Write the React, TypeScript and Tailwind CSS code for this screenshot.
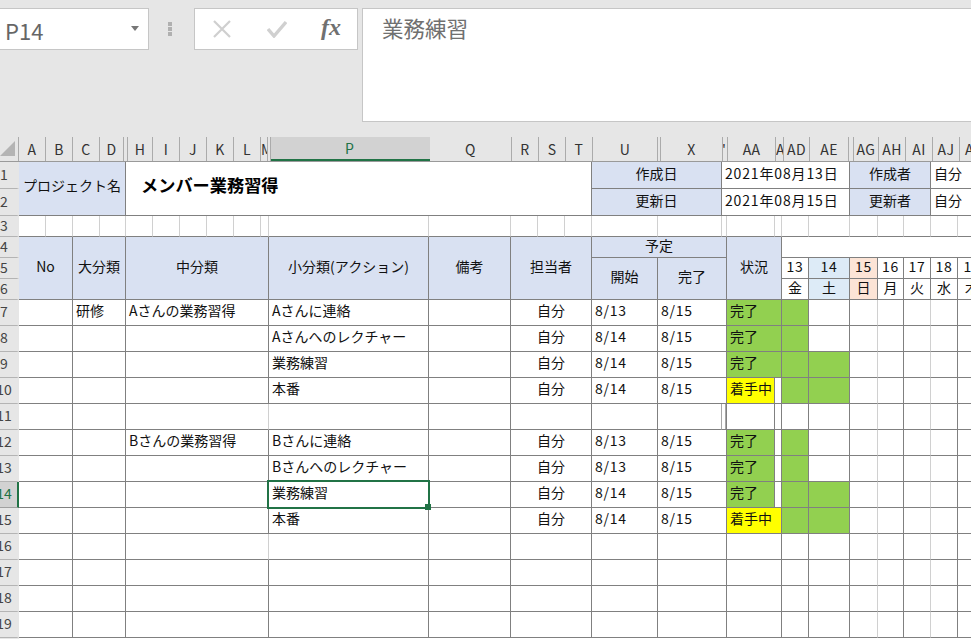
import React from "react";

const FONT = "font-['Noto_Sans_CJK_JP','Noto_Sans',sans-serif]";
const blue = "bg-[#d9e1f2]";
const green = "bg-[#92d050]";
const yellow = "bg-[#ffff00]";
const D = "border-r border-b border-[#808080]";
const LATIN = "tracking-[0.7px]";

function C({ className = "", children, pad = "pb-[5px]" }: { className?: string; children?: React.ReactNode; pad?: string }) {
  return <div className={`flex items-center overflow-hidden whitespace-nowrap ${pad} text-[14px] leading-none text-[#111] ${D} ${className}`}>{children}</div>;
}

function RowHead({ n, active }: { n: number; active?: boolean }) {
  return (
    <div className={`col-start-1 flex items-center overflow-hidden border-b pb-[3px] ${active ? "border-[#a0a0a0] bg-[#d2d2d2] text-[#217346]" : "border-[#b4b4b4] bg-[#e6e6e6] text-[#444]"} border-r-2 ${active ? "border-r-[#217346]" : "border-r-transparent"} text-[14px] leading-none`}>
      <span className="-ml-[10px] w-[28px] shrink-0 text-center">{n}</span>
    </div>
  );
}

const headCols: [string, string][] = [
  ["A", "w-[27px] justify-center"], ["B", "w-[27px] justify-center"], ["C", "w-[27px] justify-center"], ["D", "w-[24px] justify-center"], ["", "w-[4px]"],
  ["H", "w-[25px] justify-center"], ["I", "w-[27px] justify-center"], ["J", "w-[27px] justify-center"], ["K", "w-[27px] justify-center"], ["L", "w-[27px] justify-center"], ["M", "w-[7px] justify-start"], ["", "w-[3px]"],
];
const headCols2: [string, string][] = [
  ["Q", "w-[82px] justify-center"], ["R", "w-[27px] justify-center"], ["S", "w-[27px] justify-center"], ["T", "w-[27px] justify-center"], ["U", "w-[65px] justify-center"], ["", "w-[3px]"], ["X", "w-[62px] justify-center"], ["'", "w-[5px] justify-start -indent-[1px]"],
  ["AA", "w-[48px] justify-center"], ["A", "w-[8px] justify-start"], ["AD", "w-[26px] justify-center"], ["AE", "w-[39px] justify-center"], ["", "w-[5px]"], ["AG", "w-[25px] justify-center"], ["AH", "w-[27px] justify-center"], ["AI", "w-[27px] justify-center"], ["AJ", "w-[27px] justify-center"], ["A", "w-[20px] justify-center"],
];

function HeadCell({ label, w }: { label: string; w: string }) {
  return <div className={`flex shrink-0 items-center overflow-hidden border-r border-[#ababab] text-[14px] leading-none tracking-[0.4px] text-[#333] ${w}`}>{label}</div>;
}

function TrailingCells({ fill }: { fill: number }) {
  return (
    <>
      <C className={fill >= 1 ? green : ""} />
      <C className={fill >= 2 ? green : ""} />
      <div className="border-b border-r border-b-[#808080] border-r-[#d0d0d0]" />
      <div className="border-b border-r border-[#808080]" />
      <div className="border-b border-r border-b-[#808080] border-r-[#d0d0d0]" />
      <div className="border-b border-r border-[#808080]" />
      <div className="border-b border-[#808080]" />
    </>
  );
}

type R = { n: number; c?: string; m?: string; s?: string; a?: string; st?: string; en?: string; status?: string; span?: boolean; fill?: number; light?: boolean };

function DataRow({ r }: { r: R }) {
  const isBusy = r.status === "着手中";
  return (
    <>
      <RowHead n={r.n} active={r.n === 14} />
      <C className="col-span-2" />
      <C className="col-span-2 pl-[3px]">{r.c}</C>
      <C className={`col-span-6 pl-[3px] ${r.light ? "border-r-[#d0d0d0]" : ""}`}>{r.m}</C>
      <C className="pl-[3px]">{r.s}</C>
      <C />
      <C className="col-span-3 justify-center">{r.a}</C>
      <C className={`pl-[3px] ${LATIN}`}>{r.st}</C>
      {r.n === 11 ? (
        <>
          <C className="border-r-[#a8a8a8]" />
          <C className="shadow-[inset_-1px_0_0_#a8a8a8]" />
        </>
      ) : (
        <C className={`col-span-2 pl-[3px] ${LATIN}`}>{r.en}</C>
      )}
      {r.span ? (
        <C className={`col-span-2 pl-[3px] ${isBusy ? yellow : r.status ? green : ""}`}>{r.status}</C>
      ) : (
        <>
          <C className={`pl-[3px] ${isBusy ? yellow : r.status ? green : ""}`}>{r.status}</C>
          <C />
        </>
      )}
      <TrailingCells fill={r.fill ?? 0} />
    </>
  );
}

const rows: R[] = [
  { n: 7, c: "研修", m: "Aさんの業務習得", s: "Aさんに連絡", a: "自分", st: "8/13", en: "8/15", status: "完了", span: true, fill: 1 },
  { n: 8, s: "Aさんへのレクチャー", a: "自分", st: "8/14", en: "8/15", status: "完了", span: true, fill: 1 },
  { n: 9, s: "業務練習", a: "自分", st: "8/14", en: "8/15", status: "完了", span: true, fill: 2 },
  { n: 10, s: "本番", a: "自分", st: "8/14", en: "8/15", status: "着手中", fill: 2 },
  { n: 11, light: true },
  { n: 12, m: "Bさんの業務習得", s: "Bさんに連絡", a: "自分", st: "8/13", en: "8/15", status: "完了", fill: 1 },
  { n: 13, s: "Bさんへのレクチャー", a: "自分", st: "8/13", en: "8/15", status: "完了", fill: 1 },
  { n: 14, s: "業務練習", a: "自分", st: "8/14", en: "8/15", status: "完了", fill: 2 },
  { n: 15, s: "本番", a: "自分", st: "8/14", en: "8/15", status: "着手中", span: true, fill: 2 },
  { n: 16, light: true, span: true },
  { n: 17, span: true },
  { n: 18, span: true },
  { n: 19, span: true },
];

export default function App() {
  return (
    <div className={`relative h-[639px] w-[971px] overflow-hidden bg-[#e6e6e6] ${FONT}`}>
      {/* Formula bar */}
      <div className="flex h-[137px] items-start pt-[8px]">
        <div className="-ml-[3px] flex h-[42px] w-[152px] shrink-0 items-center border border-[#c6c6c6] bg-white pl-[7px] pr-[9px] text-[22px] leading-none text-[#666]">
          <span className="flex-1 pt-[2px]">P14</span>
          <svg className="mb-[2px]" width="8" height="5" viewBox="0 0 8 5"><path d="M0 0h8L4 5z" fill="#777" /></svg>
        </div>
        <div className="flex w-[41px] shrink-0 flex-col items-center gap-[1px] pt-[14px]">
          <span className="h-[4px] w-[4px] bg-[#b0b0b0]" />
          <span className="h-[4px] w-[4px] bg-[#b0b0b0]" />
          <span className="h-[4px] w-[4px] bg-[#b0b0b0]" />
        </div>
        <div className="ml-[4px] flex h-[42px] w-[164px] shrink-0 items-center border border-[#c6c6c6] bg-white">
          <svg className="ml-[18px]" width="18" height="18" viewBox="0 0 18 18"><path d="M1 1l16 16M17 1L1 17" stroke="#cfcfcf" strokeWidth="2.2" fill="none" /></svg>
          <svg className="ml-[36px]" width="20" height="18" viewBox="0 0 20 18"><path d="M1 9l6 7L19 2" stroke="#d0d0d0" strokeWidth="3.4" fill="none" /></svg>
          <span className="mb-[4px] ml-[34px] font-['Liberation_Serif',serif] text-[24px] font-bold italic leading-none text-[#707070]">fx</span>
        </div>
        <div className="ml-[4px] flex h-[114px] flex-1 items-start border border-r-0 border-[#c6c6c6] bg-white pl-[19px] pt-[5px] text-[21.5px] leading-[28px] text-[#707070]">業務練習</div>
      </div>

      {/* Column headers */}
      <div className="flex h-[25px] border-b border-[#9a9a9a]">
        <div className="flex w-[19px] shrink-0 items-end border-r border-[#ababab] pb-[4px]">
          <svg width="16" height="16" viewBox="0 0 16 16"><path d="M15 0v15H0z" fill="#b4b4b4" /></svg>
        </div>
        {headCols.map(([l, w], i) => <HeadCell key={i} label={l} w={w} />)}
        <div className="flex w-[159px] shrink-0 items-center justify-center border-b-2 border-[#217346] bg-[#d2d2d2] pr-[2px] text-[14px] leading-none text-[#217346]">P</div>
        {headCols2.map(([l, w], i) => <HeadCell key={i} label={l} w={w} />)}
      </div>

      {/* Sheet */}
      <div className="grid grid-flow-dense grid-cols-[19px_27px_27px_27px_26px_27px_27px_27px_27px_27px_8px_160px_82px_27px_27px_27px_66px_64px_5px_48px_7px_27px_41px_28px_26px_27px_27px_28px] grid-rows-[27px_27px_21px_21px_21px_21px_repeat(14,26px)] bg-white">
        {/* rows 1-2 */}
        <RowHead n={1} />
        <C pad="pb-[8px]" className={`col-span-4 row-span-2 justify-center ${blue}`}>プロジェクト名</C>
        <C pad="pb-[8px]" className="col-span-11 row-span-2 pl-[15px] text-[17.2px] font-bold text-black">メンバー業務習得</C>
        <C className={`col-span-2 justify-center ${blue}`}>作成日</C>
        <C className={`col-span-5 pl-[3px] tracking-[0.85px]`}>2021年08月13日</C>
        <C className={`col-span-3 justify-center ${blue}`}>作成者</C>
        <C className="col-span-2 border-r-0 pl-[3px]">自分</C>
        <RowHead n={2} />
        <C className={`col-span-2 justify-center ${blue}`}>更新日</C>
        <C className={`col-span-5 pl-[3px] tracking-[0.85px]`}>2021年08月15日</C>
        <C className={`col-span-3 justify-center ${blue}`}>更新者</C>
        <C className="col-span-2 border-r-0 pl-[3px]">自分</C>

        {/* row 3 */}
        <RowHead n={3} />
        {Array.from({ length: 27 }, (_, i) => (
          <div key={i} className="border-b border-r border-b-[#808080] border-r-[#d0d0d0]" />
        ))}

        {/* rows 4-6 */}
        <RowHead n={4} />
        <C className={`col-span-2 row-span-3 justify-center ${blue}`}>No</C>
        <C className={`col-span-2 row-span-3 justify-center ${blue}`}>大分類</C>
        <C className={`col-span-6 row-span-3 justify-center ${blue}`}>中分類</C>
        <C className={`row-span-3 justify-center ${blue}`}>小分類(アクション)</C>
        <C className={`row-span-3 justify-center ${blue}`}>備考</C>
        <C className={`col-span-3 row-span-3 justify-center ${blue}`}>担当者</C>
        <C className={`col-span-3 justify-center ${blue}`}>予定</C>
        <C className={`col-span-2 row-span-3 justify-center ${blue}`}>状況</C>
        <div className="col-span-7 border-b border-[#808080]" />

        <RowHead n={5} />
        <C className={`row-span-2 justify-center ${blue}`}>開始</C>
        <C className={`col-span-2 row-span-2 justify-center ${blue}`}>完了</C>
        <C className={`justify-center ${LATIN}`}>13</C>
        <C className={`justify-center bg-[#ddebf7] ${LATIN}`}>14</C>
        <C className={`justify-center bg-[#fce4d6] ${LATIN}`}>15</C>
        <C className={`justify-center ${LATIN}`}>16</C>
        <C className={`justify-center ${LATIN}`}>17</C>
        <C className={`justify-center ${LATIN}`}>18</C>
        <C className={`justify-center border-r-0 ${LATIN}`}>19</C>

        <RowHead n={6} />
        <C className="justify-center">金</C>
        <C className="justify-center bg-[#ddebf7]">土</C>
        <C className="justify-center bg-[#fce4d6]">日</C>
        <C className="justify-center">月</C>
        <C className="justify-center">火</C>
        <C className="justify-center">水</C>
        <C className="justify-center border-r-0">木</C>

        {rows.map((r) => <DataRow key={r.n} r={r} />)}
        <RowHead n={20} />
      </div>

      {/* Selected cell */}
      <div className="absolute left-[267px] top-[480px] h-[29px] w-[163px] border-2 border-[#217346]" />
      <div className="absolute left-[425px] top-[504px] h-[6px] w-[6px] bg-[#217346]" />
    </div>
  );
}
